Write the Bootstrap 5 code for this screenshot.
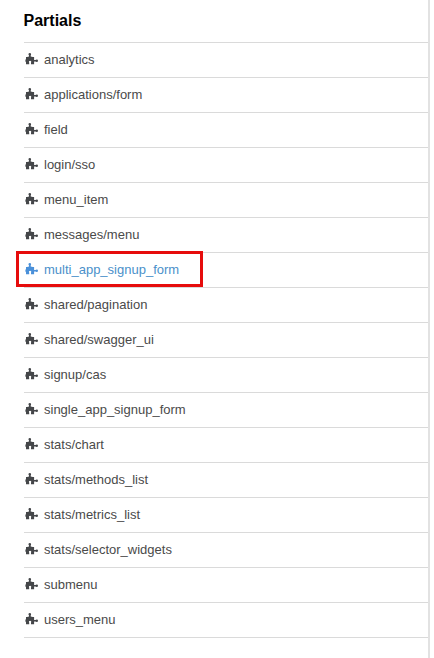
<!DOCTYPE html>
<html lang="en">
<head>
<meta charset="utf-8">
<meta name="viewport" content="width=device-width, initial-scale=1">
<title>Partials</title>
<link href="https://cdn.jsdelivr.net/npm/bootstrap@5.3.0/dist/css/bootstrap.min.css" rel="stylesheet">
<style>
body{font-family:"Liberation Sans",Arial,sans-serif;color:#4a4a4a;background:#fff;overflow:hidden}
.side-panel{width:430px;height:658px;border-right:2px solid #e2e2e2;padding-left:24px}
.panel-title{font-size:16px;line-height:20px;height:42px;padding-top:11px;color:#000;margin-left:-.5px}
.partials li{height:35px;border-top:1px solid #dadada;font-size:13px;line-height:34px}
.partials li:last-child{height:36px;border-bottom:1px solid #dadada}
.partials a{color:#4a4a4a;padding-left:1px}
.partials a.current{color:#4a90ca}
.partials svg{width:13px;height:12px;margin-right:6px;margin-bottom:2px;fill:#444649}
.partials .current svg{fill:#4a90d9}
.current-frame{left:-8px;top:-2px;width:187px;height:36px;border:3px solid #e60c0c}
</style>
<script src="https://cdn.jsdelivr.net/npm/bootstrap@5.3.0/dist/js/bootstrap.bundle.min.js"></script>
</head>
<body>
<svg class="d-none"><symbol id="puzzle" viewBox="0 0 13 12"><path d="M1 3.900Q2.700 4.200 4 3.600V2.400C3.100 1.700 3.300 0 4.800 0S6.400 1.700 5.700 2.400V3.600Q7.200 4.200 9.100 3.900V7H10.500C11.200 6.100 13 6.300 13 7.700S11.300 9.400 10.500 8.600H9.100V11.300H6V9.700C6.600 8.700 6.100 7.800 5.100 7.800S3.600 8.700 4.200 9.700V11.300H1V9.400Q1.200 8.700 .4 8.400V6.700Q1.200 6.400 1 5.700Z"/></symbol></svg>
<aside class="side-panel">
<h2 class="panel-title fw-bold mb-0">Partials</h2>
<ul class="partials list-unstyled mb-0">
<li><a href="#" class="d-flex align-items-center text-decoration-none"><svg><use href="#puzzle"/></svg>analytics</a></li>
<li><a href="#" class="d-flex align-items-center text-decoration-none"><svg><use href="#puzzle"/></svg>applications/form</a></li>
<li><a href="#" class="d-flex align-items-center text-decoration-none"><svg><use href="#puzzle"/></svg>field</a></li>
<li><a href="#" class="d-flex align-items-center text-decoration-none"><svg><use href="#puzzle"/></svg>login/sso</a></li>
<li><a href="#" class="d-flex align-items-center text-decoration-none"><svg><use href="#puzzle"/></svg>menu_item</a></li>
<li><a href="#" class="d-flex align-items-center text-decoration-none"><svg><use href="#puzzle"/></svg>messages/menu</a></li>
<li class="position-relative"><a href="#" class="current d-flex align-items-center text-decoration-none"><svg><use href="#puzzle"/></svg>multi_app_signup_form</a><span class="current-frame position-absolute pe-none"></span></li>
<li><a href="#" class="d-flex align-items-center text-decoration-none"><svg><use href="#puzzle"/></svg>shared/pagination</a></li>
<li><a href="#" class="d-flex align-items-center text-decoration-none"><svg><use href="#puzzle"/></svg>shared/swagger_ui</a></li>
<li><a href="#" class="d-flex align-items-center text-decoration-none"><svg><use href="#puzzle"/></svg>signup/cas</a></li>
<li><a href="#" class="d-flex align-items-center text-decoration-none"><svg><use href="#puzzle"/></svg>single_app_signup_form</a></li>
<li><a href="#" class="d-flex align-items-center text-decoration-none"><svg><use href="#puzzle"/></svg>stats/chart</a></li>
<li><a href="#" class="d-flex align-items-center text-decoration-none"><svg><use href="#puzzle"/></svg>stats/methods_list</a></li>
<li><a href="#" class="d-flex align-items-center text-decoration-none"><svg><use href="#puzzle"/></svg>stats/metrics_list</a></li>
<li><a href="#" class="d-flex align-items-center text-decoration-none"><svg><use href="#puzzle"/></svg>stats/selector_widgets</a></li>
<li><a href="#" class="d-flex align-items-center text-decoration-none"><svg><use href="#puzzle"/></svg>submenu</a></li>
<li><a href="#" class="d-flex align-items-center text-decoration-none"><svg><use href="#puzzle"/></svg>users_menu</a></li>
</ul>
</aside>
</body>
</html>
